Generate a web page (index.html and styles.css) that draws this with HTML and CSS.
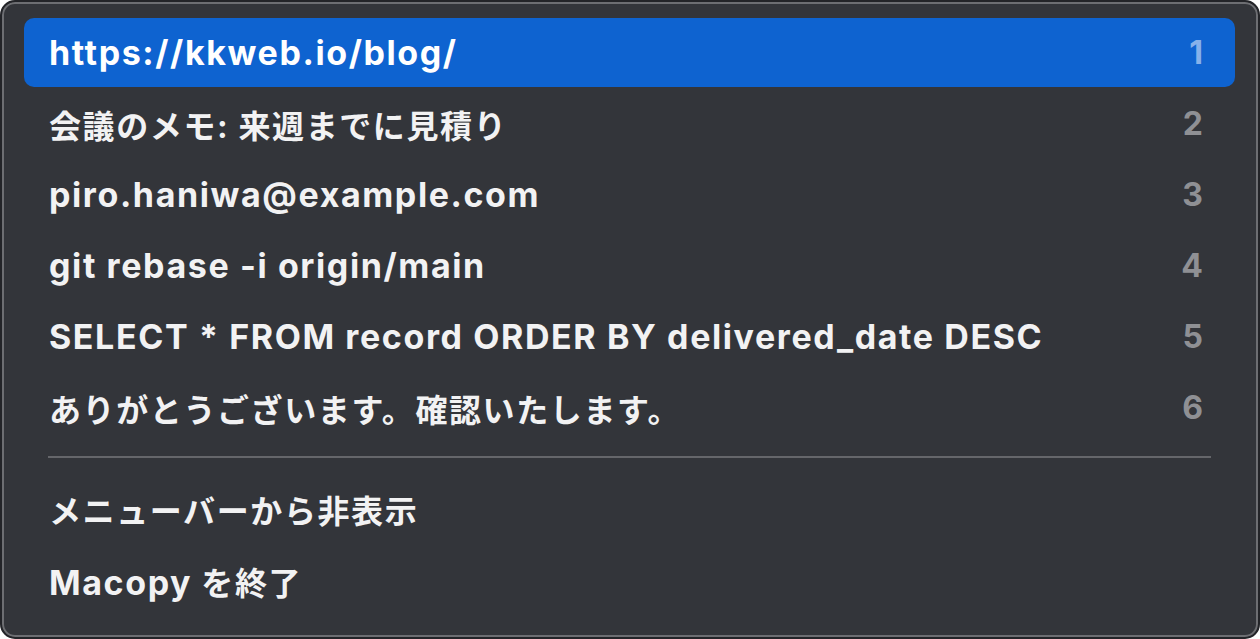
FILE: index.html
```html
<!DOCTYPE html>
<html lang="ja">
<head>
<meta charset="utf-8">
<title>Macopy</title>
<link rel="stylesheet" href="styles.css">
</head>
<body>
<div class="menu">
  <div class="list">
    <div class="item active"><span class="label en">https://kkweb.io/blog/</span><span class="key">1</span></div>
    <div class="item"><span class="label">会議のメモ: 来週までに見積り</span><span class="key">2</span></div>
    <div class="item"><span class="label en">piro.haniwa@example.com</span><span class="key">3</span></div>
    <div class="item"><span class="label en">git rebase -i origin/main</span><span class="key">4</span></div>
    <div class="item"><span class="label en">SELECT * FROM record ORDER BY delivered_date DESC</span><span class="key">5</span></div>
    <div class="item"><span class="label">ありがとうございます。確認いたします。</span><span class="key">6</span></div>
  </div>
  <div class="sep"></div>
  <div class="item cmd"><span class="label">メニューバーから非表示</span></div>
  <div class="item cmd"><span class="label"><span class="en">Macopy</span> を終了</span></div>
</div>
</body>
</html>
```
FILE: styles.css
```css
html, body {
  margin: 0;
  padding: 0;
  background: #ffffff;
}
.menu {
  box-sizing: border-box;
  width: 1260px;
  height: 639px;
  border: 2px solid #232428;
  border-radius: 15px;
  box-shadow: inset 0 0 0 2px #6d6e72;
  background: #33353a;
  padding: 16px 23px 20px 22px;
  display: flex;
  flex-direction: column;
  font-family: Inter, "Noto Sans CJK JP", sans-serif;
  font-weight: 700;
  font-size: 32px;
  letter-spacing: 1.6px;
  color: #f2f2f3;
}
.list {
  display: flex;
  flex-direction: column;
  gap: 2px;
}
.item {
  height: 69px;
  display: flex;
  align-items: center;
  justify-content: space-between;
  padding: 0 32px 0 25px;
  border-radius: 10px;
  flex: none;
}
.item.cmd {
  height: 72px;
}
.en {
  font-size: 34px;
  letter-spacing: 1.6px;
}
.item.active {
  background: #0e63d0;
  color: #ffffff;
}
.key {
  color: #8f9094;
  letter-spacing: 0;
}
.item.active .key {
  color: #86b1ea;
}
.sep {
  height: 2px;
  margin: 14px 24px 15px 24px;
  background: #65666a;
  flex: none;
}
```
